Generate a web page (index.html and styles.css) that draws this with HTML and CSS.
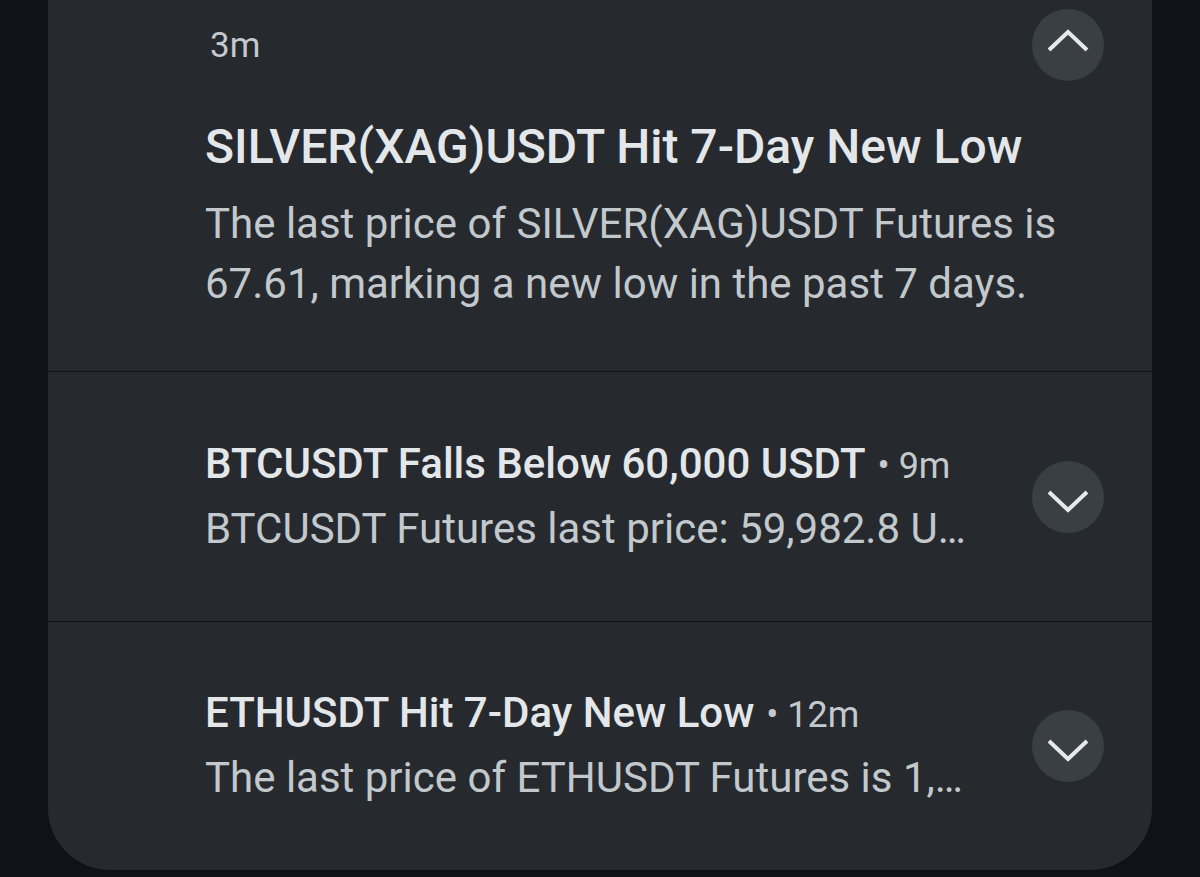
FILE: index.html
```html
<!DOCTYPE html>
<html lang="en">
<head>
    <meta charset="UTF-8">
    <meta name="viewport" content="width=device-width, initial-scale=1.0">
    <title>Notifications</title>
    <link rel="stylesheet" href="styles.css">
</head>
<body>
    <div class="panel">
        <div class="notif expanded">
            <div class="notif-text">
                <div class="time">3m</div>
                <div class="title big">SILVER(XAG)USDT Hit 7-Day New Low</div>
                <div class="body">The last price of SILVER(XAG)USDT Futures is<br>67.61, marking a new low in the past 7 days.</div>
            </div>
            <button class="toggle">
                <svg viewBox="0 0 44 44" width="44" height="44"><path d="M3 27 L22 9 L41 27" fill="none" stroke="#e6e8ea" stroke-width="4"/></svg>
            </button>
        </div>
        <div class="notif">
            <div class="notif-text">
                <div class="title"><b>BTCUSDT Falls Below 60,000 USDT</b><span class="ago"> • 9m</span></div>
                <div class="body">BTCUSDT Futures last price: 59,982.8 U…</div>
            </div>
            <button class="toggle">
                <svg viewBox="0 0 44 44" width="44" height="44"><path d="M3 17 L22 35 L41 17" fill="none" stroke="#e6e8ea" stroke-width="4"/></svg>
            </button>
        </div>
        <div class="notif">
            <div class="notif-text">
                <div class="title"><b>ETHUSDT Hit 7-Day New Low</b><span class="ago"> • 12m</span></div>
                <div class="body">The last price of ETHUSDT Futures is 1,…</div>
            </div>
            <button class="toggle">
                <svg viewBox="0 0 44 44" width="44" height="44"><path d="M3 17 L22 35 L41 17" fill="none" stroke="#e6e8ea" stroke-width="4"/></svg>
            </button>
        </div>
    </div>
</body>
</html>
```

FILE: styles.css
```css
body { margin: 0; background: #0f1317; font-family: Roboto, "Noto Sans", sans-serif; height: 877px; overflow: hidden; }
.panel { margin: 0 48px; height: 870px; background: #262a2f; border-radius: 0 0 62px 62px; display: flex; flex-direction: column; }
.notif { display: flex; align-items: center; height: 250px; box-sizing: border-box; padding: 0 48px 0 157px; border-bottom: 1px solid #111417; }
.notif:last-child { border-bottom: none; height: auto; flex: 1; }
.notif.expanded { align-items: flex-start; height: 372px; padding-top: 9px; }
.expanded .notif-text { margin-right: -80px; }
.notif-text { flex: 1; padding-bottom: 1px; }
.time { font-size: 35px; color: #c4c9cd; line-height: 36px; margin: 0 0 0 5px; padding-top: 19px; }
.title { font-size: 42px; color: #e4e7ea; line-height: 60px; white-space: nowrap; }
.title b { font-weight: 500; }
.title.big { font-size: 48px; font-weight: 500; margin-top: 53px; }
.ago { font-size: 36px; color: #c4c9cd; padding-left: 3px; }
.body { font-size: 42px; color: #c2c8cc; line-height: 61px; margin-top: 2px; white-space: nowrap; }
.expanded .body { margin-top: 17px; line-height: 60px; }
.toggle { width: 72px; height: 72px; border-radius: 50%; border: none; background: #3a3f43; display: flex; align-items: center; justify-content: center; padding: 0; flex-shrink: 0; position: relative; z-index: 1; }
```
